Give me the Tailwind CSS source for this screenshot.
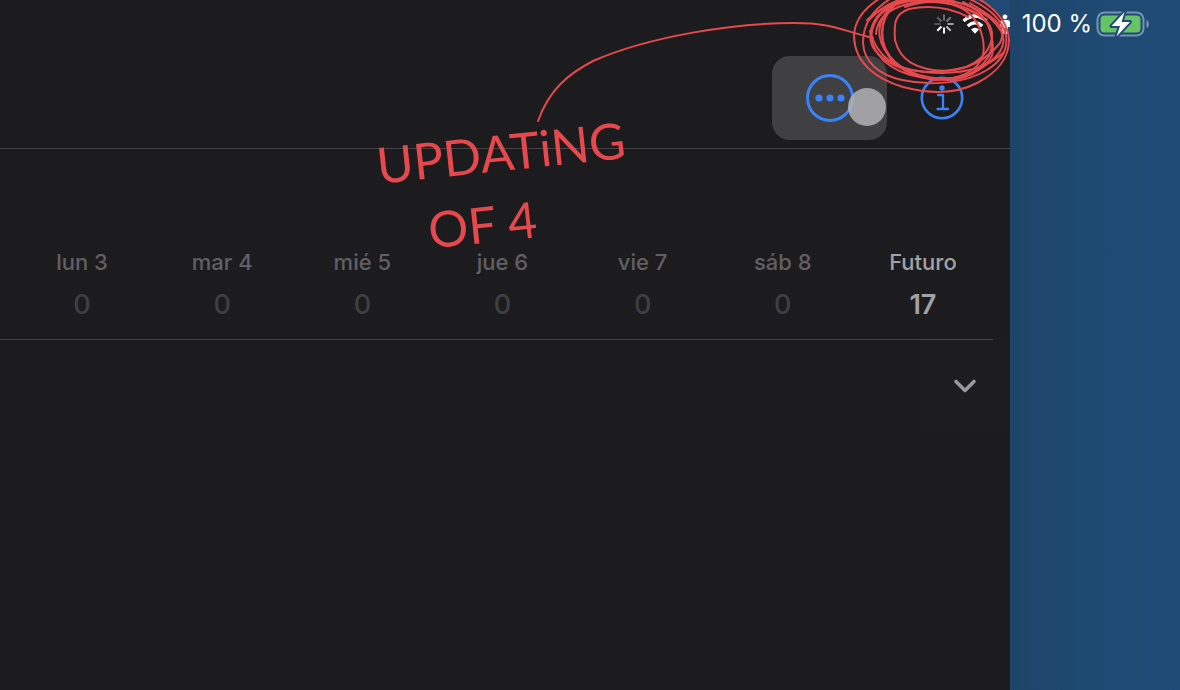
<!doctype html>
<html lang="es">
<head>
  <meta charset="UTF-8">
  <meta name="viewport" content="width=device-width, initial-scale=1.0">
  <title>Calendario</title>
  <script src="https://cdn.jsdelivr.net/npm/@tailwindcss/browser@4"></script>
</head>
<body class="relative flex min-h-screen overflow-x-hidden bg-[#204a73] font-['Inter',sans-serif]">

  <main class="flex-1 rounded-tr-[42px] bg-[#1c1c1e]">
    <header class="flex items-start justify-end border-b border-[#444446] pt-14 pr-[46px] pb-2">
      <button type="button" aria-label="Más opciones" class="mr-[33px] flex h-[84px] w-[115px] items-center justify-center rounded-[18px] bg-[#403f41]">
        <svg class="size-12" viewBox="0 0 48 48" fill="none">
          <circle cx="24" cy="24" r="22.5" stroke="#3a82f7" stroke-width="3"/>
          <g fill="#3a82f7">
            <circle cx="13" cy="24" r="3.6"/>
            <circle cx="24" cy="24" r="3.6"/>
            <circle cx="35" cy="24" r="3.6"/>
          </g>
        </svg>
      </button>
      <button type="button" aria-label="Información" class="flex h-[84px] items-center">
        <svg class="size-11" viewBox="0 0 44 44" fill="none" stroke="#3a82f7">
          <circle cx="22" cy="22" r="20.2" stroke-width="2.6"/>
          <circle cx="22" cy="12" r="2.7" fill="#3a82f7" stroke="none"/>
          <path d="M18 19h5v14M17.5 33h10.5" stroke-width="2.3" stroke-linecap="round" stroke-linejoin="round"/>
        </svg>
      </button>
    </header>

    <!-- Days -->
    <section class="mr-[17px] border-b border-[#444446] pt-[97px] pb-2 pl-3">
      <table class="w-full table-fixed text-center">
        <thead class="text-[22px] leading-8 text-[#606063]">
          <tr>
            <th scope="col" class="font-medium">lun 3</th>
            <th scope="col" class="font-medium">mar 4</th>
            <th scope="col" class="font-medium">mié 5</th>
            <th scope="col" class="font-medium">jue 6</th>
            <th scope="col" class="font-medium">vie 7</th>
            <th scope="col" class="font-medium">sáb 8</th>
            <th scope="col" class="font-medium text-[#a2a2a6]">Futuro</th>
          </tr>
        </thead>
        <tbody class="text-[27px] leading-[53px] font-medium text-[#3f3f41]">
          <tr>
            <td>0</td>
            <td>0</td>
            <td>0</td>
            <td>0</td>
            <td>0</td>
            <td>0</td>
            <td class="font-semibold text-[#a2a2a6]">17</td>
          </tr>
        </tbody>
      </table>
    </section>

    <div class="flex justify-end">
      <button type="button" aria-label="Desplegar" class="flex h-[91px] w-[90px] items-center justify-center bg-[#1d1d1f]">
        <svg class="h-4 w-6" viewBox="0 0 24 16" fill="none" stroke="#98989f" stroke-width="3.6" stroke-linecap="round" stroke-linejoin="round">
          <path d="M3 3.5l9 9 9-9"/>
        </svg>
      </button>
    </div>
  </main>

  <aside class="w-[170px] bg-linear-to-r from-[#1f4469] via-[#1e4a72] to-[#204a77]"></aside>

  <!-- Status bar -->
  <div class="absolute top-0 right-0 flex h-12 items-center pr-[30px] text-white">
    <svg class="mr-2 size-5" viewBox="0 0 20 20" fill="none" stroke="#fff" stroke-width="2">
      <path d="M10 .5v6" opacity=".35"/>
      <path d="M16.7 3.3l-4.2 4.2" opacity=".4"/>
      <path d="M19.5 10h-6" opacity=".6"/>
      <path d="M16.7 16.7l-4.2-4.2" opacity=".7"/>
      <path d="M10 19.5v-6"/>
      <path d="M3.3 16.7l4.2-4.2"/>
      <path d="M.5 10h6" opacity=".25"/>
      <path d="M3.3 3.3l4.2 4.2" opacity=".3"/>
    </svg>
    <svg class="mr-3 h-5 w-[26px]" viewBox="0 0 26 20" fill="none" stroke="#fff" stroke-width="3.2">
      <path d="M1.5 7Q13-3 24.5 7M5.7 12Q13 5.500 20.300 12"/>
      <path d="M13 19.800l-4-4.300q4-3.300 8 0z" fill="#fff" stroke="none"/>
    </svg>
    <svg class="mr-3 h-5 w-[10px]" viewBox="0 0 10 20" fill="#fff">
      <circle cx="5" cy="2.800" r="2.400"/>
      <path d="M2.500 6h5Q10 6 10 8.500V13H8v7H5.700v-6H4.300v6H2v-7H0V8.500Q0 6 2.500 6z"/>
    </svg>
    <span class="mr-1 text-[24px] leading-8">100 %</span>
    <svg class="h-8 w-[54px]" viewBox="0 0 54 32" fill="none">
      <rect x="1.500" y="4.500" width="46" height="23" rx="7" stroke="#7694b2" stroke-width="2"/>
      <rect x="4.500" y="7.500" width="40" height="17" rx="4" fill="#66c466"/>
      <path d="M50.500 12v8q2.500-1 2.500-4t-2.500-4z" fill="#7694b2"/>
      <path d="M28.500 4L15.500 18h8.500l-3.500 10.500L34 14h-8.500z" fill="#fff" stroke="#204a75" stroke-width="4" stroke-linejoin="round" paint-order="stroke"/>
    </svg>
  </div>

  <!-- Touch point -->
  <div class="absolute top-[88px] right-[294px] size-[38px] rounded-full bg-[#b9b9bb]/80"></div>

  <!-- Red pen notes -->
  <div class="pointer-events-none absolute top-0 right-0 h-[270px] w-[820px] overflow-hidden text-[#e5484d]">
    <svg class="absolute inset-0 h-full w-full" viewBox="360 0 820 270" fill="none" stroke="#e5484d" stroke-width="2" stroke-linecap="round">
      <path d="M538 121C549 90 568 74 593 61C650 36 735 23 794 23C835 23 842 31 873 38"/>
      <path d="M882 -3C862 9 854 23 854 37C855 63 876 79 903 87C930 94 956 94 977 83C997 73 1009 58 1009 40C1008 20 993 7 976 -3"/>
      <path d="M895 -4C872 9 863 24 863 43C864 62 879 75 902 80C935 87 967 82 987 70C1003 60 1008 49 1006 36C1002 17 986 5 962 -4"/>
      <path d="M867 20C883 6 900 -2 925 -4C960 0 990 11 1001 31C1010 48 993 64 967 75C936 84 902 77 884 61C868 45 866 25 883 11C902 -2 935 -3 963 4"/>
      <path d="M871 37C873 16 886 6 907 1C939 -3 967 6 985 20C1000 33 990 57 966 67C939 74 904 74 887 61C876 53 868 46 871 30C877 8 898 -1 925 -4"/>
      <path d="M876 34C877 15 893 6 917 2C949 -1 980 9 988 25C995 42 995 58 971 74C944 83 912 78 894 61C880 48 872 28 889 9"/>
      <path d="M890 6C879 23 880 43 890 58C901 72 920 80 948 80C974 79 992 62 993 51C993 30 987 13 963 2"/>
      <path d="M968 17C945 5 924 6 909 9C894 14 894 24 895 40C900 60 915 70 946 71C970 69 986 60 1000 43C1010 25 987 14 970 3"/>
      <path d="M905 7C930 -2 958 2 971 15C983 28 985 45 983 55C979 70 960 80 935 80C909 77 889 63 883 42C880 25 886 9 901 1"/>
      <path d="M868 21C884 3 905 -5 930 -5M870 31C877 57 895 69 924 72C954 75 983 72 1004 52"/>
    </svg>
    <p class="absolute top-[128px] left-[16px] -rotate-6 font-['Lato',sans-serif] text-[50px] leading-[48px] whitespace-nowrap">UPDATiNG</p>
    <p class="absolute top-[200px] left-[68px] -rotate-6 font-['Lato',sans-serif] text-[50px] leading-[48px] whitespace-nowrap">OF 4</p>
  </div>

</body>
</html>
